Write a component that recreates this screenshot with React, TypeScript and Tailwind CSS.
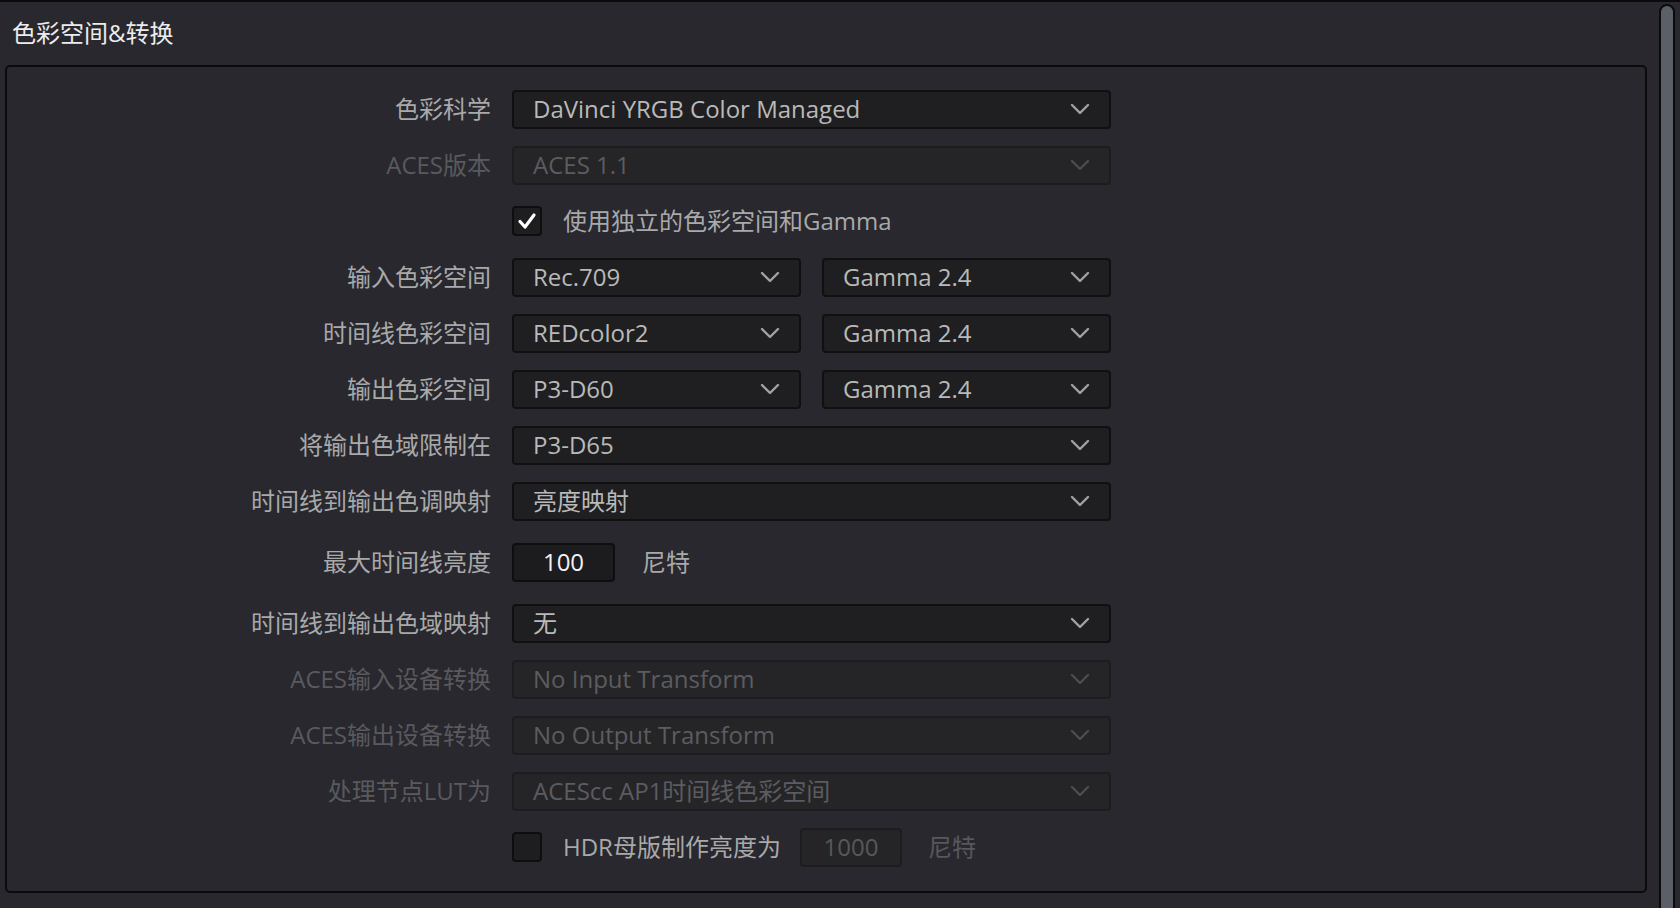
import React from 'react';

const font = { fontFamily: '"Open Sans", "Noto Sans CJK SC", sans-serif' };

function Chevron({ disabled }: { disabled?: boolean }) {
  return (
    <svg width="20" height="12" viewBox="0 0 20 12" className={disabled ? 'text-[#4c4c51]' : 'text-[#a2a2a4]'}>
      <polyline points="2,2 10,10 18,2" fill="none" stroke="currentColor" strokeWidth="2.4" strokeLinecap="round" strokeLinejoin="round" />
    </svg>
  );
}

function Select({ value, disabled, wide = true }: { value: string; disabled?: boolean; wide?: boolean }) {
  return (
    <div
      className={`flex h-[39px] items-center justify-between rounded-[4px] border-2 pl-[19px] pr-[19px] ${wide ? 'w-[599px]' : 'w-[289px]'} ${
        disabled ? 'border-[#1d1d20] bg-[#252528] text-[#5c5c60]' : 'border-[#101011] bg-[#1f1f21] text-[#b9b9ba]'
      }`}
    >
      <span className="text-[24px] leading-none">{value}</span>
      <Chevron disabled={disabled} />
    </div>
  );
}

function Row({ label, disabled, h = 'h-[56px]', children }: { label?: string; disabled?: boolean; h?: string; children: React.ReactNode }) {
  return (
    <div className={`flex items-center gap-[21px] ${h}`}>
      <div className={`w-[484px] text-right text-[24px] leading-none ${disabled ? 'text-[#5a5a5e]' : 'text-[#a9a9aa]'}`}>{label}</div>
      <div className="flex items-center">{children}</div>
    </div>
  );
}

function Check({ checked }: { checked?: boolean }) {
  return (
    <div className="flex h-[30px] w-[30px] items-center justify-center rounded-[4px] border-2 border-[#0e0e0f] bg-[#1e1e20]">
      {checked && (
        <svg width="20" height="18" viewBox="0 0 20 18">
          <polyline points="3,9.5 8,15 17,3" fill="none" stroke="#ffffff" strokeWidth="3.2" strokeLinecap="round" strokeLinejoin="round" />
        </svg>
      )}
    </div>
  );
}

export default function App() {
  return (
    <div className="flex h-[908px] w-[1680px] overflow-hidden border-t-2 border-[#0b0b0c] bg-[#28282e]" style={font}>
      <div className="flex w-[1655px] flex-col">
        <div className="flex h-[62px] items-center pl-[12px] text-[24px] leading-none text-[#ececec]">色彩空间&amp;转换</div>
        <div className="ml-[5px] mt-[1px] h-[828px] w-[1642px] rounded-[5px] border-2 border-[#0b0b0c] bg-[#28282e] pt-[14px]">
          <Row label="色彩科学">
            <Select value="DaVinci YRGB Color Managed" />
          </Row>
          <Row label="ACES版本" disabled>
            <Select value="ACES 1.1" disabled />
          </Row>
          <Row>
            <Check checked />
            <span className="ml-[21px] text-[24px] leading-none text-[#a9a9aa]">使用独立的色彩空间和Gamma</span>
          </Row>
          <Row label="输入色彩空间">
            <div className="flex gap-[21px]">
              <Select value="Rec.709" wide={false} />
              <Select value="Gamma 2.4" wide={false} />
            </div>
          </Row>
          <Row label="时间线色彩空间">
            <div className="flex gap-[21px]">
              <Select value="REDcolor2" wide={false} />
              <Select value="Gamma 2.4" wide={false} />
            </div>
          </Row>
          <Row label="输出色彩空间">
            <div className="flex gap-[21px]">
              <Select value="P3-D60" wide={false} />
              <Select value="Gamma 2.4" wide={false} />
            </div>
          </Row>
          <Row label="将输出色域限制在">
            <Select value="P3-D65" />
          </Row>
          <Row label="时间线到输出色调映射">
            <Select value="亮度映射" />
          </Row>
          <Row label="最大时间线亮度" h="h-[66px]">
            <div className="flex h-[39px] w-[103px] items-center justify-center rounded-[4px] border-2 border-[#0e0e0f] bg-[#1c1c1e] text-[24px] leading-none text-[#f2f2f2]">
              100
            </div>
            <span className="ml-[27px] text-[24px] leading-none text-[#a9a9aa]">尼特</span>
          </Row>
          <Row label="时间线到输出色域映射">
            <Select value="无" />
          </Row>
          <Row label="ACES输入设备转换" disabled>
            <Select value="No Input Transform" disabled />
          </Row>
          <Row label="ACES输出设备转换" disabled>
            <Select value="No Output Transform" disabled />
          </Row>
          <Row label="处理节点LUT为" disabled>
            <Select value="ACEScc AP1时间线色彩空间" disabled />
          </Row>
          <Row>
            <Check />
            <span className="ml-[21px] text-[24px] leading-none text-[#a9a9aa]">HDR母版制作亮度为</span>
            <div className="ml-[19px] flex h-[39px] w-[102px] items-center justify-center rounded-[4px] border-2 border-[#1d1d20] bg-[#252528] text-[24px] leading-none text-[#58585c]">
              1000
            </div>
            <span className="ml-[26px] text-[24px] leading-none text-[#58585c]">尼特</span>
          </Row>
        </div>
      </div>
      <div className="ml-[4px] mt-[2px] h-[920px] w-[16px] rounded-t-[8px] border-2 border-[#0b0b0c] bg-[#5b5f68]" />
    </div>
  );
}
